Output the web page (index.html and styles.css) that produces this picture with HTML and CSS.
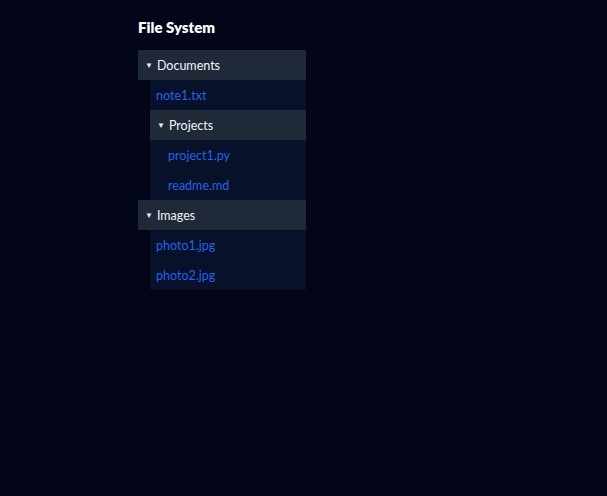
FILE: index.html
```html
<!DOCTYPE html>
<html>
<head>
<meta charset="utf-8">
<link rel="stylesheet" href="styles.css">
</head>
<body>
<div class="app">
  <h1 class="title">File System</h1>
  <div class="tree">
    <div class="folder">
      <div class="folder-head"><span class="caret">▼</span>Documents</div>
      <div class="children">
        <div class="file">note1.txt</div>
        <div class="folder">
          <div class="folder-head"><span class="caret">▼</span>Projects</div>
          <div class="children">
            <div class="file">project1.py</div>
            <div class="file">readme.md</div>
          </div>
        </div>
      </div>
    </div>
    <div class="folder">
      <div class="folder-head"><span class="caret">▼</span>Images</div>
      <div class="children">
        <div class="file">photo1.jpg</div>
        <div class="file">photo2.jpg</div>
      </div>
    </div>
  </div>
</div>
</body>
</html>
```
FILE: styles.css
```css
html, body {
  margin: 0;
  height: 100%;
  background: #020617;
}
body {
  font-family: Lato, "Noto Sans", sans-serif;
  color: #f8fafc;
}
.app {
  padding: 18px 0 0 138px;
}
.title {
  margin: 0 0 13px 0;
  font-size: 15px;
  font-weight: 800;
  line-height: 19px;
  color: #ffffff;
}
.tree {
  width: 168px;
}
.folder-head {
  height: 30px;
  display: flex;
  align-items: center;
  padding-left: 7px;
  background: #1f2937;
  font-size: 12.5px;
  color: #f1f5f9;
}
.caret {
  font-size: 8px;
  margin-right: 4px;
  color: #e5e7eb;
}
.children {
  margin-left: 12px;
  background: #071129;
}
.file {
  height: 30px;
  display: flex;
  align-items: center;
  padding-left: 6px;
  font-size: 12.5px;
  color: #2563eb;
}
```
